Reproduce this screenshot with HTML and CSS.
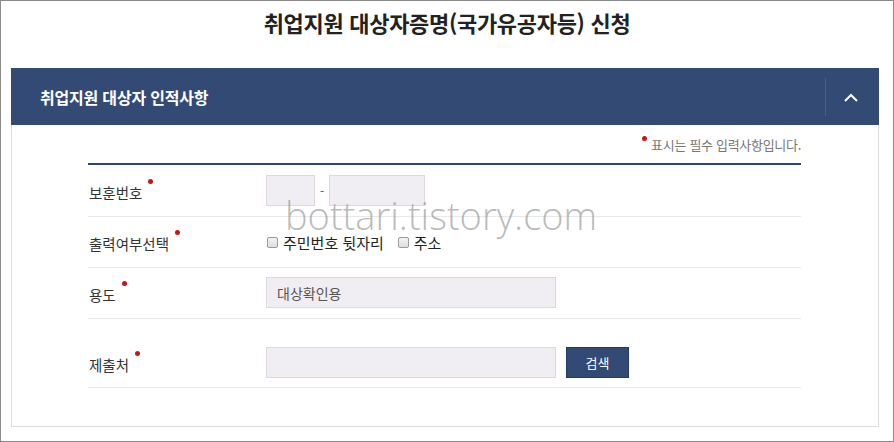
FILE: index.html
```html
<!DOCTYPE html>
<html lang="ko">
<head>
<meta charset="utf-8">
<title>취업지원 대상자증명(국가유공자등) 신청</title>
<link rel="stylesheet" href="styles.css">
</head>
<body>
<div class="frame">
  <h1 class="title">취업지원 대상자증명(국가유공자등) 신청</h1>
  <section class="panel">
    <div class="panel-head">
      <h2 class="panel-title">취업지원 대상자 인적사항</h2>
      <button class="toggle" type="button" aria-label="접기">
        <svg width="14" height="9" viewBox="0 0 14 9"><polyline points="1,8 7,2 13,8" fill="none" stroke="#fff" stroke-width="2"/></svg>
      </button>
    </div>
    <div class="panel-body">
      <p class="note"><span class="dot"></span>표시는 필수 입력사항입니다.</p>
      <div class="form">
        <div class="row row-first">
          <div class="label"><span class="req">보훈번호</span></div>
          <div class="field">
            <span class="input w-short"></span>
            <span class="dash">-</span>
            <span class="input w-mid"></span>
          </div>
        </div>
        <div class="row row-check">
          <div class="label"><span class="req">출력여부선택</span></div>
          <div class="field">
            <label class="check"><span class="box"></span>주민번호 뒷자리</label>
            <label class="check"><span class="box"></span>주소</label>
          </div>
        </div>
        <div class="row row-use">
          <div class="label"><span class="req">용도</span></div>
          <div class="field">
            <span class="input w-long">대상확인용</span>
          </div>
        </div>
        <div class="row row-dest">
          <div class="label"><span class="req">제출처</span></div>
          <div class="field">
            <span class="input w-long"></span>
            <button class="btn" type="button">검색</button>
          </div>
        </div>
      </div>
    </div>
  </section>
  <div class="watermark">bottari.tistory.com</div>
</div>
</body>
</html>
```
FILE: styles.css
```css
html, body {
  margin: 0;
  padding: 0;
  background: #fff;
}
body {
  font-family: "Noto Sans CJK KR", "Noto Sans", sans-serif;
  color: #333;
}
.frame {
  position: relative;
  width: 894px;
  height: 442px;
  box-sizing: border-box;
  border: 1px solid #8a8a8a;
  padding-left: 10px;
  overflow: hidden;
}
.title {
  margin: 0;
  height: 67px;
  box-sizing: border-box;
  padding-top: 6px;
  padding-right: 10px;
  line-height: 30px;
  font-size: 22px;
  font-weight: 700;
  letter-spacing: -0.3px;
  color: #222;
  text-align: center;
}
.panel {
  width: 868px;
}
.panel-head {
  height: 57px;
  background: #334a75;
  display: flex;
  align-items: center;
  padding-left: 29px;
}
.panel-title {
  margin: 0;
  font-size: 16px;
  font-weight: 700;
  color: #fff;
  letter-spacing: -0.2px;
  line-height: 20px;
}
.toggle {
  margin-left: auto;
  width: 54px;
  height: 38px;
  padding: 0 4px 0 0;
  border: 0;
  border-left: 1px solid #4a5e84;
  background: transparent;
  display: flex;
  align-items: center;
  justify-content: center;
}
.toggle svg {
  margin-top: 2px;
}
.panel-body {
  height: 302px;
  box-sizing: border-box;
  border: 1px solid #dcdcdc;
  border-top: 0;
  padding: 0 77px 0 76px;
}
.note {
  margin: 0;
  padding-top: 10px;
  height: 38px;
  box-sizing: border-box;
  line-height: 20px;
  font-size: 13px;
  color: #777;
  text-align: right;
  letter-spacing: -0.3px;
}
.dot {
  display: inline-block;
  width: 5px;
  height: 5px;
  border-radius: 50%;
  background: #c4161c;
  margin-right: 4px;
  vertical-align: 9px;
}
.form {
  border-top: 2px solid #2f4468;
}
.row {
  display: flex;
  align-items: center;
  border-bottom: 1px solid #e8e8e8;
}
.row-first { padding: 10px 0; }
.row-check { height: 50px; }
.row-use { padding: 9px 0 10px; }
.row-dest { padding: 28px 0 9px; }
.label {
  width: 178px;
  box-sizing: border-box;
  flex: none;
  font-size: 14.5px;
  color: #333;
  padding-left: 1px;
}
.req::after {
  content: "";
  display: inline-block;
  width: 5px;
  height: 5px;
  border-radius: 50%;
  background: #c4161c;
  margin-left: 6px;
  vertical-align: 15px;
}
.field {
  display: flex;
  align-items: center;
}
.input {
  display: flex;
  align-items: center;
  height: 31px;
  box-sizing: border-box;
  border: 1px solid #dcd8dd;
  background: #f1eef3;
  font-size: 14px;
  color: #555;
  padding-left: 10px;
}
.w-short { width: 49px; }
.w-mid { width: 96px; }
.w-long { width: 290px; }
.dash {
  width: 14px;
  text-align: center;
  font-size: 12px;
  color: #555;
}
.check {
  display: flex;
  align-items: center;
  font-size: 15px;
  color: #222;
  margin-right: 13px;
  margin-left: 1px;
}
.box {
  width: 9px;
  height: 9px;
  border: 1px solid #9a9a9a;
  border-radius: 2px;
  background: linear-gradient(#f4f4f4, #dedede);
  margin-right: 5px;
}
.btn {
  margin-left: 10px;
  width: 63px;
  height: 31px;
  border: 1px solid #243a62;
  background: #334a75;
  color: #fff;
  font-family: inherit;
  font-size: 13px;
  padding: 0;
}
.watermark {
  position: absolute;
  left: 284px;
  top: 189px;
  font-family: "Open Sans", sans-serif;
  font-weight: 300;
  font-size: 38px;
  line-height: 50px;
  color: rgba(140, 140, 140, 0.6);
  pointer-events: none;
}
```
